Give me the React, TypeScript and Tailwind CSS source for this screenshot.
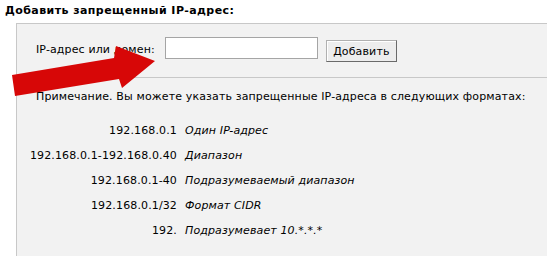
const formats = [
  { value: "192.168.0.1", label: "Один IP-адрес" },
  { value: "192.168.0.1-192.168.0.40", label: "Диапазон" },
  { value: "192.168.0.1-40", label: "Подразумеваемый диапазон" },
  { value: "192.168.0.1/32", label: "Формат CIDR" },
  { value: "192.", label: "Подразумевает 10.*.*.*" },
]

function RedArrow() {
  return (
    <svg
      className="pointer-events-none absolute left-0 top-0"
      width="547"
      height="256"
      viewBox="0 0 547 256"
    >
      <polygon
        points="12,75 114,58 116,46 155,61 122,88 119,79 15,96"
        fill="#d70707"
      />
    </svg>
  )
}

export default function App() {
  return (
    <div className="relative h-[256px] w-[547px] overflow-hidden bg-white font-['DejaVu_Sans',Verdana,sans-serif] text-[11px] leading-[13px] tracking-[0.13px] text-black">
      <div className="flex h-[23px] items-start pl-[5px] pt-[4px] font-bold tracking-[0.43px]">
        Добавить запрещенный IP-адрес:
      </div>

      <div className="ml-[16px] h-[233px] border-l border-t border-[#c8c8c8] bg-[#f2f2f2]">
        <div className="flex items-start pl-[19px] pt-[13px]">
          <span className="mt-[6px] whitespace-nowrap">IP-адрес или домен:</span>
          <input
            type="text"
            className="ml-[10px] h-[22px] w-[153px] border border-[#a5a5a5] bg-white px-1 outline-none"
          />
          <button className="ml-[8px] mt-[3px] h-[22px] w-[71px] border border-[#b0b0b0] border-b-[#6a6a6a] border-r-[#6a6a6a] bg-[#ededed] pt-[1px] text-[11px] tracking-[0.13px] shadow-[inset_1px_1px_0_#ffffff]">
            Добавить
          </button>
        </div>

        <div className="ml-[16px] mt-[15px] border-t border-[#c8c8c8]" />

        <div className="whitespace-nowrap pl-[19px] pt-[12px]">
          Примечание. Вы можете указать запрещенные IP-адреса в следующих форматах:
        </div>

        <div className="mt-[15px] grid grid-cols-[144px_auto] gap-x-[8px] pl-[16px]">
          {formats.map((f) => (
            <div key={f.value} className="contents">
              <div className="flex h-[25px] items-center justify-end whitespace-nowrap">{f.value}</div>
              <div className="flex h-[25px] items-center whitespace-nowrap italic">{f.label}</div>
            </div>
          ))}
        </div>
      </div>

      <RedArrow />
    </div>
  )
}
